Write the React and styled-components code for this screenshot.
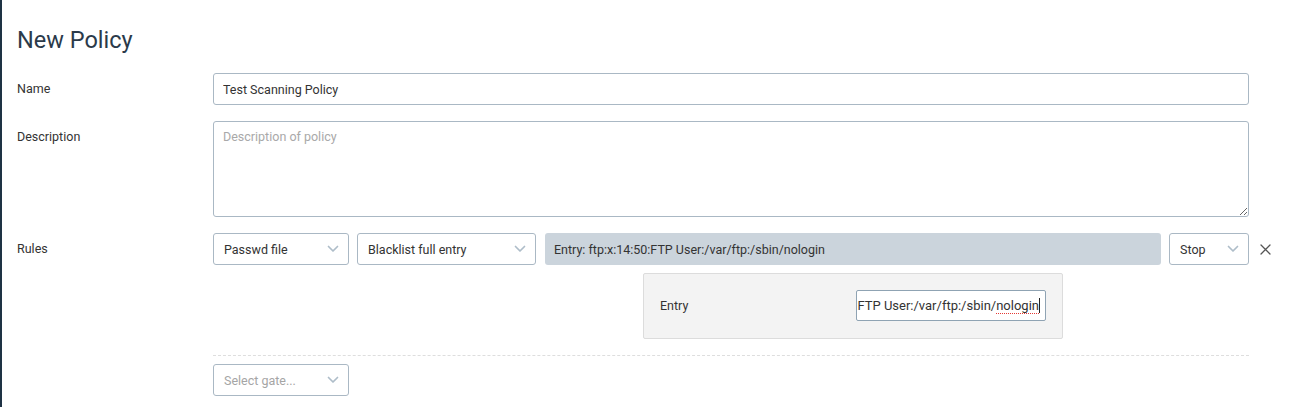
import React, { useState } from "react";
import styled, { createGlobalStyle } from "styled-components";

const Global = createGlobalStyle`
  html, body { margin: 0; padding: 0; background: #fff; }
  body { font-family: Roboto, "Liberation Sans", Arial, sans-serif; color: #333; }
  * { box-sizing: border-box; }
`;

const Page = styled.div`
  min-height: 407px;
  border-left: 2px solid #1e3244;
  padding: 26px 0 0 15px;
`;

const Title = styled.h1`
  margin: 0 0 19px;
  font-size: 23.5px;
  line-height: 28px;
  font-weight: 400;
  color: #2b3a4a;
`;

const Form = styled.div`
  display: grid;
  grid-template-columns: 196px 1fr 48px;
  row-gap: 16px;
  align-items: start;
`;

const Label = styled.div`
  grid-column: 1;
  font-size: 12.5px;
  line-height: 16px;
  padding-top: 8px;
  color: #333;
`;

const Field = styled.div`
  grid-column: 2;
  min-width: 0;
`;

const Side = styled.div`
  grid-column: 3;
  display: flex;
  align-items: center;
  height: 32px;
  padding-left: 11px;
`;

const TextInput = styled.input`
  display: block;
  width: 100%;
  height: 32px;
  padding: 0 9px;
  font: inherit;
  font-size: 12.5px;
  color: #333;
  border: 1px solid #aab8c4;
  border-radius: 3px;
  outline: none;
  background: #fff;
`;

const TextArea = styled.textarea`
  display: block;
  width: 100%;
  height: 96px;
  padding: 7px 9px;
  font: inherit;
  font-size: 12.5px;
  line-height: 16px;
  color: #333;
  border: 1px solid #aab8c4;
  border-radius: 3px;
  outline: none;
  resize: vertical;
  &::placeholder { color: #a9a9a9; }
`;

const RuleRow = styled.div`
  display: flex;
  align-items: center;
  gap: 8px;
`;

const SelectBox = styled.div`
  flex: 0 0 ${(p) => p.$w}px;
  height: 32px;
  display: flex;
  align-items: center;
  justify-content: space-between;
  padding: 0 9px 0 10px;
  border: 1px solid #aab8c4;
  border-radius: 3px;
  background: #fff;
  font-size: 12.5px;
  color: ${(p) => (p.$placeholder ? "#a5a5a5" : "#333")};
`;

const EntryBox = styled.div`
  flex: 1;
  height: 32px;
  margin-left: 1px;
  display: flex;
  align-items: center;
  padding: 0 9px;
  background: #cbd4dc;
  border-radius: 3px;
  font-size: 12.5px;
  color: #333;
  white-space: nowrap;
  overflow: hidden;
`;

const RemoveBtn = styled.button`
  border: 0;
  background: none;
  padding: 0;
  display: flex;
  align-items: center;
  cursor: pointer;
`;

const Popover = styled.div`
  margin: 8px 0 0 430px;
  width: 420px;
  display: flex;
  align-items: center;
  justify-content: space-between;
  padding: 16px 16px 17px;
  background: #f3f3f3;
  border: 1px solid #dcdcdc;
  border-radius: 2px;
`;

const PopLabel = styled.span`
  font-size: 12.5px;
  color: #333;
`;

const ScrolledInput = styled.div`
  width: 190px;
  height: 31px;
  display: flex;
  align-items: center;
  justify-content: flex-end;
  overflow: hidden;
  padding: 0 5px 0 9px;
  border: 1px solid #8fa3b3;
  border-radius: 2px;
  background: #fff;
  font-size: 13px;
  color: #333;
  white-space: nowrap;
`;

const Misspelled = styled.span`
  text-decoration: underline dotted #e53935;
  text-underline-offset: 3px;
  text-decoration-thickness: 1px;
  border-right: 1px solid #222;
`;

const Divider = styled.div`
  margin-top: 16px;
  border-top: 1px dashed #dedede;
`;

const GateRow = styled.div`
  margin-top: 8px;
  display: flex;
`;

const Chevron = () => (
  <svg width="12" height="8" viewBox="0 0 12 8" fill="none">
    <path d="M1.5 1.5 L6 6 L10.5 1.5" stroke="#aebdc9" strokeWidth="1.7" strokeLinecap="round" strokeLinejoin="round" />
  </svg>
);

const CloseIcon = () => (
  <svg width="11" height="11" viewBox="0 0 11 11">
    <path d="M1 1 L10 10 M10 1 L1 10" stroke="#555" strokeWidth="1.3" strokeLinecap="round" />
  </svg>
);

const Select = ({ w, children, placeholder }) => (
  <SelectBox $w={w} $placeholder={placeholder}>
    <span>{children}</span>
    <Chevron />
  </SelectBox>
);

export default function App() {
  const [name, setName] = useState("Test Scanning Policy");
  return (
    <>
      <Global />
      <Page>
        <Title>New Policy</Title>
        <Form>
          <Label>Name</Label>
          <Field>
            <TextInput value={name} onChange={(e) => setName(e.target.value)} />
          </Field>

          <Label>Description</Label>
          <Field>
            <TextArea placeholder="Description of policy" />
          </Field>

          <Label>Rules</Label>
          <Field>
            <RuleRow>
              <Select w={136}>Passwd file</Select>
              <Select w={179}>Blacklist full entry</Select>
              <EntryBox>Entry: ftp:x:14:50:FTP User:/var/ftp:/sbin/nologin</EntryBox>
              <Select w={80}>Stop</Select>
            </RuleRow>
            <Popover>
              <PopLabel>Entry</PopLabel>
              <ScrolledInput>
                <span>ftp:x:14:50:FTP User:/var/ftp:/sbin/</span>
                <Misspelled>nologin</Misspelled>
              </ScrolledInput>
            </Popover>
            <Divider />
            <GateRow>
              <Select w={136} placeholder>Select gate...</Select>
            </GateRow>
          </Field>
          <Side>
            <RemoveBtn aria-label="Remove rule">
              <CloseIcon />
            </RemoveBtn>
          </Side>
        </Form>
      </Page>
    </>
  );
}
